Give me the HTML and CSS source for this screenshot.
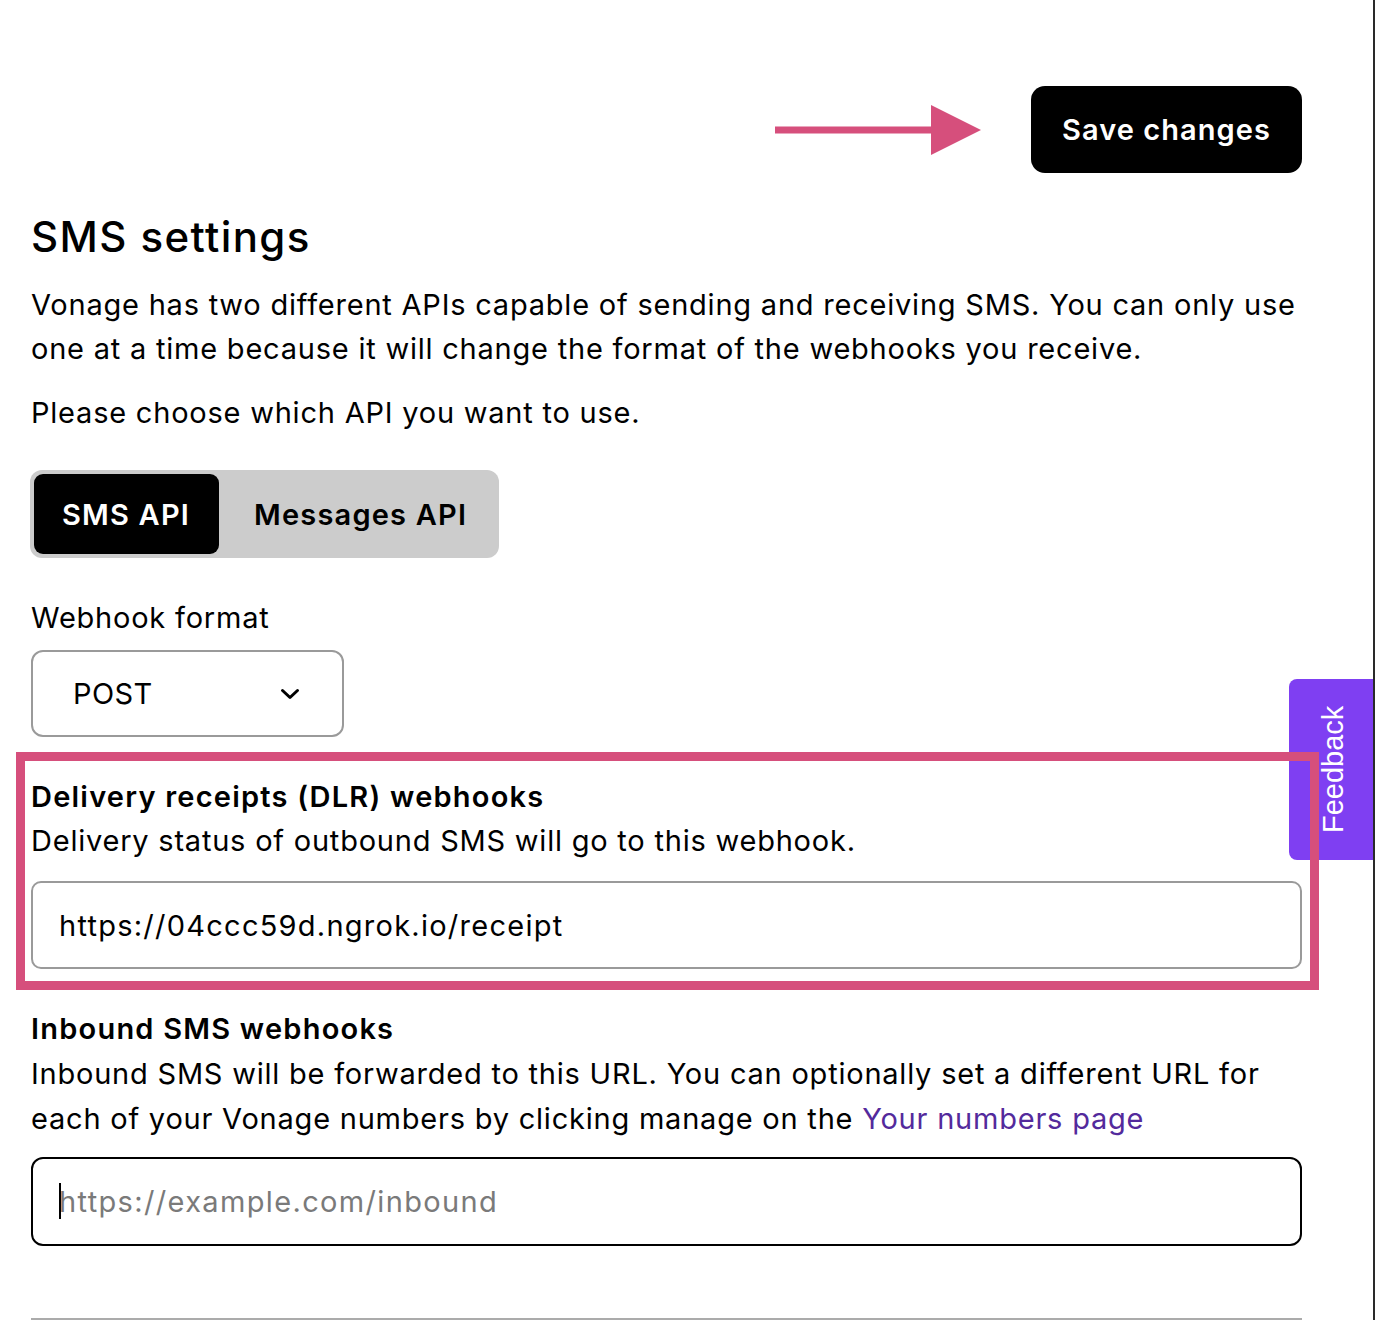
FILE: index.html
```html
<!DOCTYPE html>
<html lang="en">
<head>
<meta charset="utf-8">
<title>SMS settings</title>
<link rel="stylesheet" href="styles.css">
</head>
<body>
<div class="page">
  <div class="topbar">
    <svg class="arrow" width="206" height="50" viewBox="0 0 206 50" aria-hidden="true">
      <rect x="0" y="21.5" width="160" height="7" fill="#d64f7c"/>
      <polygon points="156,0 206,25 156,50" fill="#d64f7c"/>
    </svg>
    <button class="btn-save" type="button">Save changes</button>
  </div>

  <h1 class="title">SMS settings</h1>
  <p class="text intro">Vonage has two different APIs capable of sending and receiving SMS. You can only use one at a time because it will change the format of the webhooks you receive.</p>
  <p class="text choose">Please choose which API you want to use.</p>

  <div class="segmented">
    <button class="seg seg-active" type="button">SMS API</button>
    <button class="seg" type="button">Messages API</button>
  </div>

  <label class="text label">Webhook format</label>
  <div class="select">
    <span>POST</span>
    <svg width="20" height="12" viewBox="0 0 20 12" aria-hidden="true"><path d="M2.5 2.5 L10 9.5 L17.5 2.5" fill="none" stroke="#000" stroke-width="3" stroke-linecap="round" stroke-linejoin="round"/></svg>
  </div>

  <div class="highlight">
    <h2 class="subhead">Delivery receipts (DLR) webhooks</h2>
    <p class="text desc">Delivery status of outbound SMS will go to this webhook.</p>
    <input class="field" type="text" value="https://04ccc59d.ngrok.io/receipt">
  </div>

  <h2 class="subhead inbound">Inbound SMS webhooks</h2>
  <p class="text desc2">Inbound SMS will be forwarded to this URL. You can optionally set a different URL for each of your Vonage numbers by clicking manage on the <a class="link" href="#">Your numbers page</a></p>
  <div class="field-wrap">
    <input class="field field-focus" type="text" placeholder="https://example.com/inbound">
    <span class="caret"></span>
  </div>

  <div class="divider"></div>

  <div class="feedback">Feedback</div>
</div>
</body>
</html>
```

FILE: styles.css
```css
* { box-sizing: border-box; }

html, body {
  margin: 0;
  padding: 0;
  background: #fff;
}

body {
  font-family: Inter, "Noto Sans", sans-serif;
  color: #000;
  overflow: hidden;
}

.page {
  position: relative;
  width: 1375px;
  height: 1320px;
  padding: 0 71px 0 31px;
  border-right: 2px solid #2a2a2a;
}

.topbar {
  display: flex;
  justify-content: flex-end;
  align-items: center;
  gap: 50px;
  padding-top: 86px;
}

.arrow { display: block; }

.btn-save {
  width: 271px;
  height: 87px;
  border: none;
  border-radius: 14px;
  background: #000;
  color: #fff;
  font-family: Inter, "Noto Sans", sans-serif;
  font-size: 29px;
  font-weight: 600;
  letter-spacing: 1.05px;
  cursor: pointer;
}

.title {
  margin: 36px 0 0;
  font-size: 42px;
  font-weight: 500;
  line-height: 56px;
  letter-spacing: 1.4px;
}

.text {
  font-size: 29px;
  line-height: 44px;
  letter-spacing: 0.78px;
  margin: 0;
}

.intro { margin-top: 18px; }
.choose { margin-top: 20px; }

.segmented {
  display: inline-flex;
  margin-top: 35px;
  margin-left: -1px;
  padding: 4px;
  background: #cccccc;
  border-radius: 12px;
}

.seg {
  height: 80px;
  padding: 0 28px 0 35px;
  border: none;
  border-radius: 9px;
  background: transparent;
  color: #000;
  font-family: Inter, "Noto Sans", sans-serif;
  font-size: 29px;
  font-weight: 600;
  letter-spacing: 1.2px;
  cursor: pointer;
}

.seg-active {
  background: #000;
  color: #fff;
  padding: 0 29px 0 28px;
}

.label {
  display: block;
  margin-top: 38px;
}

.select {
  display: flex;
  align-items: center;
  justify-content: space-between;
  width: 313px;
  height: 87px;
  margin-top: 10px;
  padding: 0 42px 0 40px;
  border: 2px solid #9a9a9a;
  border-radius: 12px;
  font-size: 29px;
  letter-spacing: 0.4px;
}

.select svg { display: block; }

.highlight {
  position: relative;
  z-index: 2;
  margin: 15px -17px 0 -15px;
  padding: 14px 8px 12px 6px;
  border: 9px solid #d64f7c;
}

.subhead {
  margin: 0;
  font-size: 29px;
  font-weight: 600;
  line-height: 44px;
  letter-spacing: 1.22px;
}

.desc { margin-top: 0; }

.field {
  display: block;
  width: 100%;
  height: 88px;
  margin-top: 18px;
  padding: 0 26px;
  border: 2px solid #9a9a9a;
  border-radius: 10px;
  background: #fff;
  color: #000;
  font-family: Inter, "Noto Sans", sans-serif;
  font-size: 29px;
  letter-spacing: 1.25px;
  outline: none;
}

.inbound { margin-top: 17px; }

.desc2 { line-height: 45px; }

.link {
  color: #532a9c;
  text-decoration: none;
}

.field-wrap {
  position: relative;
  margin-top: 16px;
}

.field-wrap .field { margin-top: 0; height: 89px; }

.field-focus {
  border-color: #000;
  border-radius: 12px;
  letter-spacing: 1.35px;
}

.field-focus::placeholder {
  color: #7a7a7a;
  opacity: 1;
}

.caret {
  position: absolute;
  left: 28px;
  top: 26px;
  width: 2px;
  height: 36px;
  background: #000;
}

.divider {
  margin-top: 72px;
  height: 3px;
  background: #ababab;
}

.feedback {
  position: absolute;
  z-index: 1;
  top: 679px;
  right: 0;
  width: 84px;
  height: 181px;
  display: flex;
  align-items: center;
  justify-content: center;
  padding-right: 4px;
  background: #7f3ff2;
  color: #fff;
  font-family: "Liberation Sans", Arial, sans-serif;
  font-size: 29px;
  writing-mode: vertical-rl;
  transform: rotate(180deg);
  border-radius: 0 8px 8px 0;
}
```
